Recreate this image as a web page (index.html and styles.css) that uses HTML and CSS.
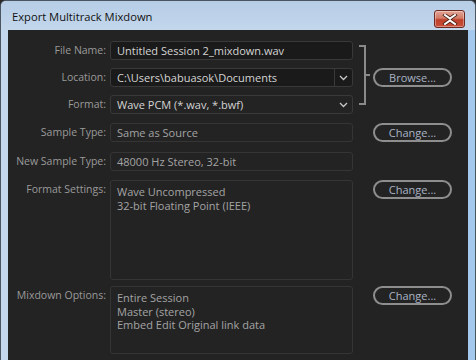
FILE: index.html
```html
<!DOCTYPE html>
<html lang="en">
  <head>
    <meta charset="UTF-8">
    <title>Export Multitrack Mixdown</title>
    <link rel="stylesheet" href="styles.css">
  </head>
  <body>
    <div class="window">
      <div class="titlebar">
        <span class="title">Export Multitrack Mixdown</span>
        <button class="close" type="button" aria-label="Close">
          <svg width="16" height="11" viewBox="0 0 16 11">
            <path d="M3 1 L8 4.5 L13 1 M3 10 L8 6.5 L13 10" stroke="#4a2018" stroke-width="3.6" fill="none" stroke-linecap="square"/>
            <path d="M3 1 L8 4.5 L13 1 M3 10 L8 6.5 L13 10" stroke="#ffffff" stroke-width="2" fill="none" stroke-linecap="square"/>
          </svg>
        </button>
      </div>

      <div class="panel">
        <form class="grid">
          <label class="label r1">File Name:</label>
          <div class="field input r1">Untitled Session 2_mixdown.wav</div>

          <label class="label r2">Location:</label>
          <div class="field input select r2">
            <span class="value">C:\Users\babuasok\Documents</span>
            <span class="chevron"><svg width="9" height="6" viewBox="0 0 9 6"><path d="M1 1 L4.5 4.5 L8 1" stroke="#c8c8c8" stroke-width="1.3" fill="none"/></svg></span>
          </div>

          <label class="label r3">Format:</label>
          <div class="field select r3">
            <span class="value">Wave PCM (*.wav, *.bwf)</span>
            <span class="chevron plain"><svg width="9" height="6" viewBox="0 0 9 6"><path d="M1 1 L4.5 4.5 L8 1" stroke="#c8c8c8" stroke-width="1.3" fill="none"/></svg></span>
          </div>

          <div class="bracket"><span class="tick"></span></div>
          <button class="btn r2" type="button">Browse...</button>

          <label class="label r4">Sample Type:</label>
          <div class="field muted r4">Same as Source</div>
          <button class="btn r4" type="button">Change...</button>

          <label class="label r5">New Sample Type:</label>
          <div class="field muted r5">48000 Hz Stereo, 32-bit</div>

          <label class="label r6">Format Settings:</label>
          <div class="field muted box box-tall r6">Wave Uncompressed<br>32-bit Floating Point (IEEE)</div>
          <button class="btn r6" type="button">Change...</button>

          <label class="label r7">Mixdown Options:</label>
          <div class="field muted box box-short r7">Entire Session<br>Master (stereo)<br>Embed Edit Original link data</div>
          <button class="btn r7" type="button">Change...</button>
        </form>
      </div>
    </div>
  </body>
</html>
```

FILE: styles.css
```css
:root {
  --panel-bg: #232323;
  --input-bg: #1a1a1a;
  --field-border: #393939;
  --label-color: #9a9a9a;
  --text-color: #d4d4d4;
  --muted-color: #a3a3a3;
  --btn-border: #8e8e8e;
  --btn-text: #a9b3c4;
}

* {
  box-sizing: border-box;
}

body {
  margin: 0;
  width: 476px;
  height: 360px;
  overflow: hidden;
  background: #2a2a2a;
  font-family: 'Open Sans', 'Noto Sans', sans-serif;
  font-size: 11px;
}

.window {
  width: 476px;
  height: 360px;
  border: 1px solid #4b5560;
  border-bottom: none;
  border-radius: 6px 6px 0 0;
  padding: 0 7px;
  background: linear-gradient(90deg, #c3d6eb 0%, #b4cde6 60%, #a4c9ee 100%);
  display: flex;
  flex-direction: column;
}

.titlebar {
  height: 29px;
  flex: none;
  display: flex;
  align-items: flex-start;
  justify-content: space-between;
  background: linear-gradient(180deg, #b6cde6 0%, #c3d7ec 100%);
  margin: 0 -7px;
  padding: 0 10px 0 11px;
  border-radius: 5px 5px 0 0;
}

.title {
  font-size: 11.2px;
  color: #111;
  margin-top: 8px;
}

.close {
  margin-top: 9px;
  width: 31px;
  height: 18px;
  padding: 0;
  border: 1px solid #6e2a22;
  border-radius: 3px;
  background: linear-gradient(180deg, #e3a597 0%, #d27a66 45%, #bf3f2a 55%, #c9513a 100%);
  box-shadow: inset 0 0 0 1px rgba(255, 255, 255, 0.35);
  display: flex;
  align-items: center;
  justify-content: center;
}

.panel {
  flex: 1;
  background: var(--panel-bg);
  padding-top: 11px;
}

.grid {
  display: grid;
  grid-template-columns: 102px 243px 20px 79px;
  grid-template-rows: 27px 27px 28px 29px 28px 106px 68px;
  margin: 0;
}

.r1 { grid-row: 1; }
.r2 { grid-row: 2; }
.r3 { grid-row: 3; }
.r4 { grid-row: 4; }
.r5 { grid-row: 5; }
.r6 { grid-row: 6; }
.r7 { grid-row: 7; }

.label {
  grid-column: 1;
  align-self: start;
  text-align: right;
  padding-right: 4px;
  font-size: 10.5px;
  color: var(--label-color);
  line-height: 19px;
  white-space: nowrap;
}

.field {
  grid-column: 2;
  align-self: start;
  height: 19px;
  line-height: 17px;
  padding: 0 6px;
  border: 1px solid var(--field-border);
  border-radius: 3px;
  color: var(--text-color);
  white-space: nowrap;
  overflow: hidden;
}

.input {
  background: var(--input-bg);
}

.select {
  display: flex;
  padding-right: 0;
}

.select .value {
  flex: 1;
}

.chevron {
  width: 18px;
  border-left: 1px solid var(--field-border);
  display: flex;
  align-items: center;
  justify-content: center;
}

.chevron.plain {
  border-left: none;
}

.muted {
  color: var(--muted-color);
  border-color: #353535;
}

.box {
  white-space: normal;
  line-height: 13.5px;
  padding-top: 4px;
}

.box-tall {
  height: 100px;
}

.box-short {
  height: 68px;
}

.bracket {
  grid-column: 3;
  grid-row: 1 / 4;
  align-self: start;
  margin: 4px 0 0 6px;
  width: 7px;
  height: 60px;
  border: 2px solid #8a8a8a;
  border-left: none;
  position: relative;
}

.bracket .tick {
  position: absolute;
  left: 5px;
  top: 27px;
  width: 6px;
  height: 2px;
  background: #8a8a8a;
}

.btn {
  grid-column: 4;
  align-self: start;
  height: 19px;
  padding: 0;
  font-family: inherit;
  font-size: 11px;
  color: var(--btn-text);
  background: transparent;
  border: 2px solid var(--btn-border);
  border-radius: 10px;
  line-height: 14px;
}
```
